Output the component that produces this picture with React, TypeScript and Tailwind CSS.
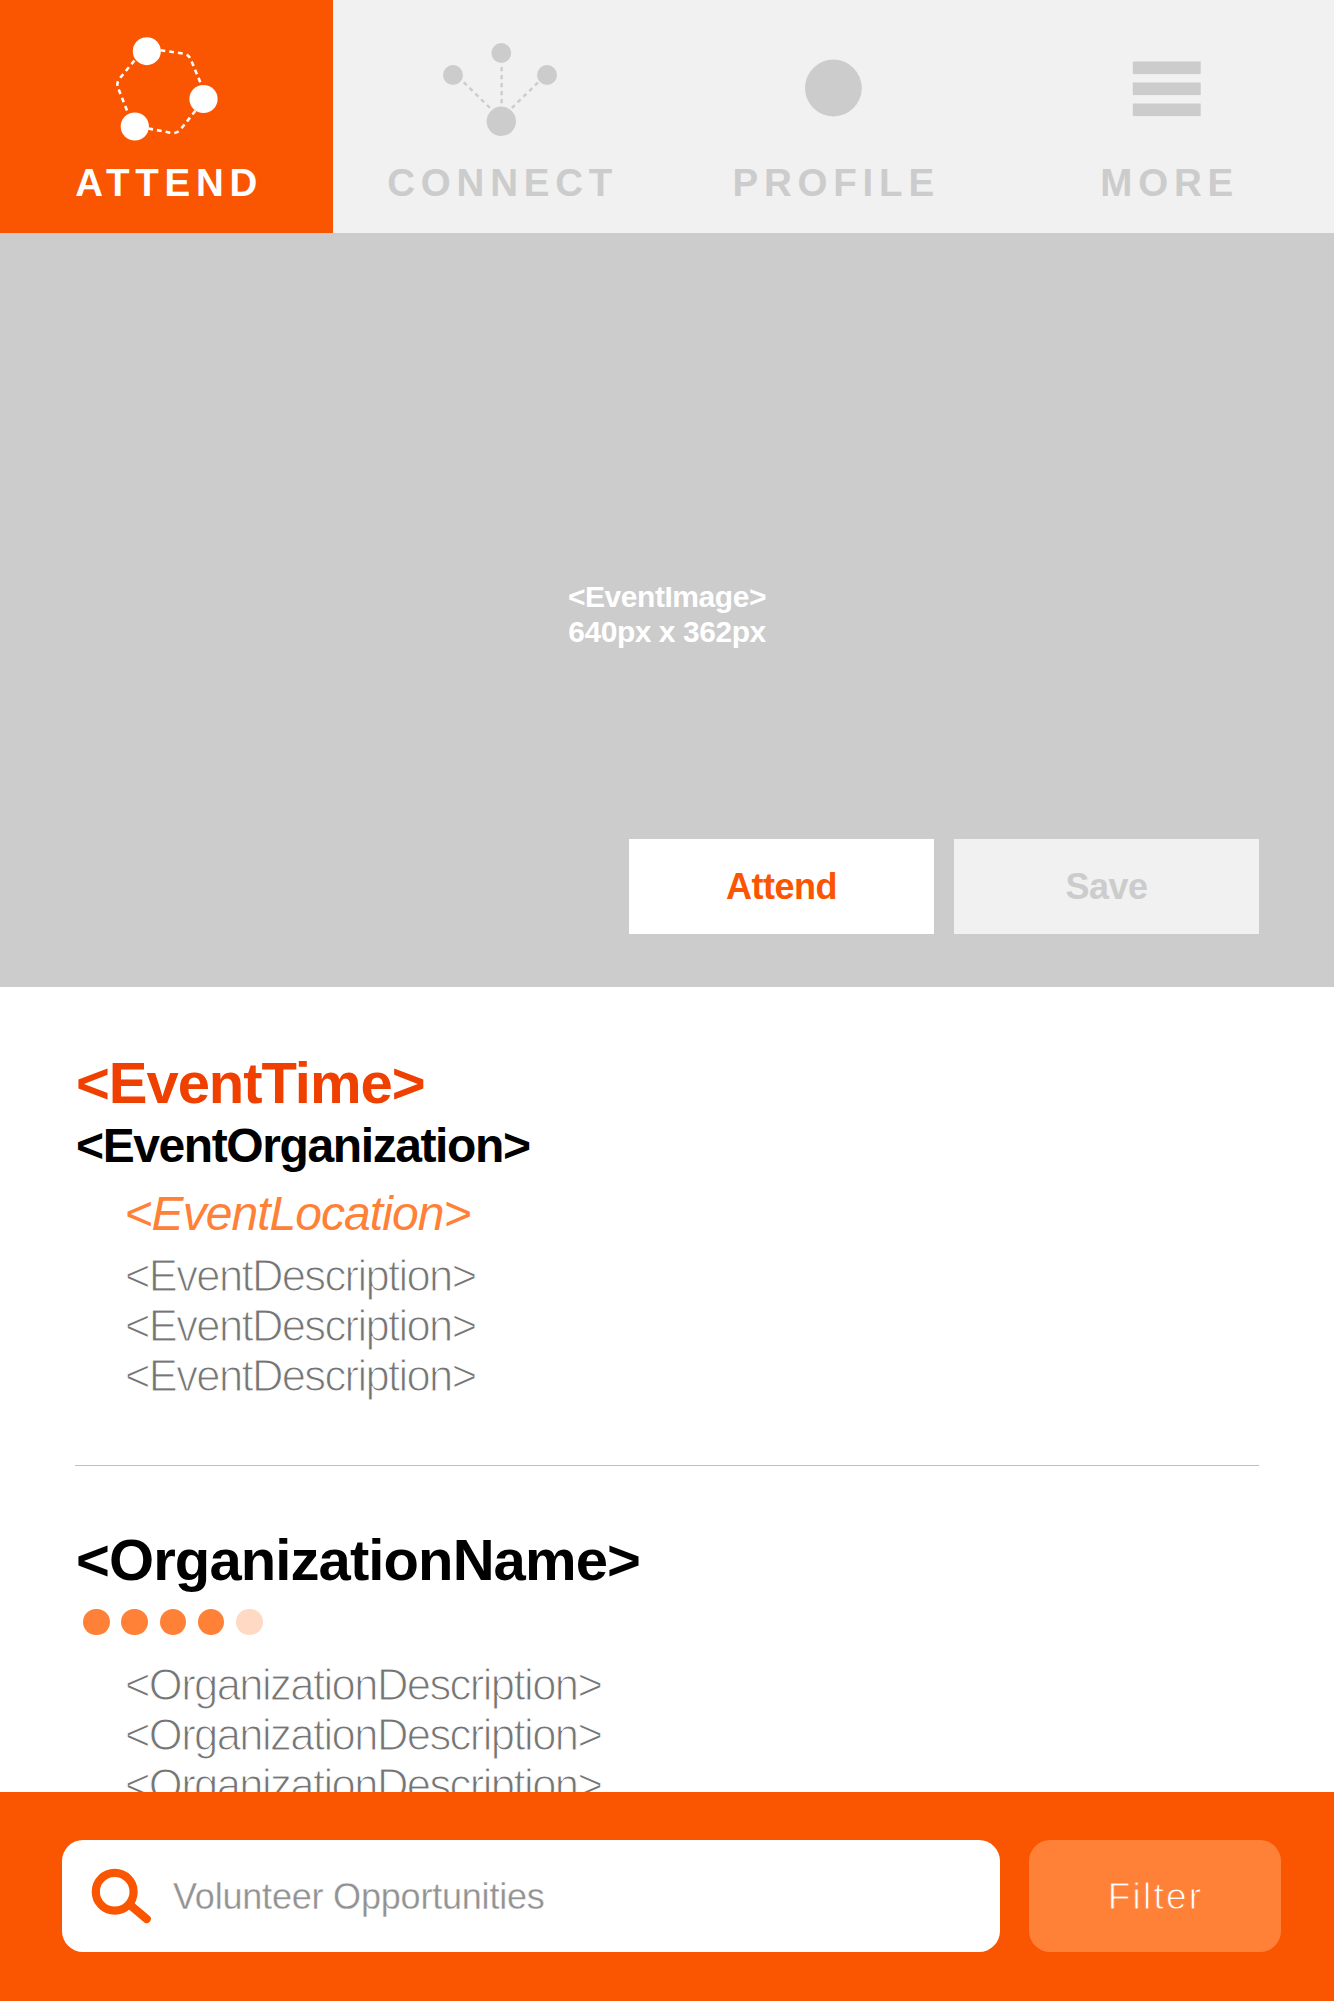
import type { ReactNode } from "react";

type TabProps = {
  label: string;
  className: string;
  viewBox: string;
  children: ReactNode;
};

function Tab({ label, className, viewBox, children }: TabProps) {
  return (
    <button className={`flex h-full flex-col items-center ${className}`}>
      <svg className="h-[162px] w-full shrink-0" viewBox={viewBox} fill="currentColor">
        {children}
      </svg>
      <span className="mt-px pl-[5.4px] text-[38.5px] leading-[40px] font-bold tracking-[5.8px]">{label}</span>
    </button>
  );
}

function TopNav() {
  return (
    <nav className="flex h-[233px] shrink-0 bg-[#f1f1f1] text-[#cccccc]">
      <Tab label="ATTEND" className="w-[333px] bg-[#fa5500] text-white" viewBox="0 0 333 162">
        <g fill="none" stroke="currentColor" strokeWidth="2.6" strokeDasharray="4.8 4">
          <path d="M160.5 50.3 L183 53.5 Q189 54.5 191 60 L201 84" />
          <path d="M134.5 60.5 L120 78 Q116.5 82 117.5 86.5 L128 113" />
          <path d="M148.3 128.5 L172 133 Q177 133.5 180.5 129.5 L196 110" />
        </g>
        <circle cx="146.8" cy="51.2" r="14" />
        <circle cx="203.5" cy="99" r="14.1" />
        <circle cx="134.8" cy="126.5" r="14.1" />
      </Tab>
      <Tab label="CONNECT" className="w-[334px]" viewBox="333 0 334 162">
        <g fill="none" stroke="currentColor" strokeWidth="2.4">
          <path d="M501.7 67 V104" strokeDasharray="4.2 3.8" />
          <path d="M463.8 82.3 L490 108" strokeDasharray="4.2 3.9" />
          <path d="M538 82.5 L511.8 108" strokeDasharray="4.2 3.9" />
        </g>
        <circle cx="501.3" cy="53" r="9.9" />
        <circle cx="453" cy="75" r="10" />
        <circle cx="547" cy="75" r="10" />
        <circle cx="501.3" cy="121.3" r="14.7" />
      </Tab>
      <Tab label="PROFILE" className="w-[333px]" viewBox="667 0 333 162">
        <circle cx="833.4" cy="88" r="28.4" />
      </Tab>
      <Tab label="MORE" className="w-[334px]" viewBox="1000 0 334 162">
        <rect x="1132.8" y="61.5" width="67.9" height="12.6" />
        <rect x="1132.8" y="82.5" width="67.9" height="12.6" />
        <rect x="1132.8" y="103.5" width="67.9" height="12.6" />
      </Tab>
    </nav>
  );
}

function Hero() {
  return (
    <section className="flex h-[754px] shrink-0 flex-col bg-[#cccccc] pt-[346px]">
      <p className="text-center text-[30px] leading-[35px] font-bold tracking-[-0.45px] text-white">
        &lt;EventImage&gt;
        <br />
        640px x 362px
      </p>
      <div className="mt-[190px] flex justify-end gap-5 pr-[75px] text-[36px] leading-[40px] font-bold tracking-[-0.5px]">
        <button className="h-[95px] w-[305px] bg-white pt-px text-[#fa5500]">Attend</button>
        <button className="h-[95px] w-[305px] bg-[#f1f1f1] pt-px text-[#cccccc]">Save</button>
      </div>
    </section>
  );
}

const lightText =
  "pl-[50px] text-[43.5px] leading-[50px] text-[#757575] [-webkit-text-stroke:1.1px_#ffffff]";

function Details() {
  return (
    <main className="flex min-h-0 flex-1 flex-col overflow-hidden px-[75px] pt-[67px]">
      <h1 className="pl-px text-[58px] leading-[58px] font-bold tracking-[-1.05px] text-[#f04000]">
        &lt;EventTime&gt;
      </h1>
      <h2 className="mt-[10px] pl-px text-[48px] leading-[48px] font-bold tracking-[-1.4px] text-black">
        &lt;EventOrganization&gt;
      </h2>
      <p className="mt-5 pl-[49.5px] text-[48px] leading-[48px] tracking-[-0.95px] text-[#ff8137] italic">
        &lt;EventLocation&gt;
      </p>
      <div className={`mt-[13px] tracking-[-1.62px] ${lightText}`}>
        <p>&lt;EventDescription&gt;</p>
        <p>&lt;EventDescription&gt;</p>
        <p>&lt;EventDescription&gt;</p>
      </div>
      <hr className="mt-[64px] h-px shrink-0 border-0 bg-[#bfbfbf]" />
      <h2 className="mt-[65px] pl-px text-[58px] leading-[58px] font-bold tracking-[-0.9px] text-black">
        &lt;OrganizationName&gt;
      </h2>
      <div className="mt-[19.5px] flex shrink-0 gap-[11.8px] pl-2">
        <span className="size-[26.5px] rounded-full bg-[#ff8137]" />
        <span className="size-[26.5px] rounded-full bg-[#ff8137]" />
        <span className="size-[26.5px] rounded-full bg-[#ff8137]" />
        <span className="size-[26.5px] rounded-full bg-[#ff8137]" />
        <span className="size-[26.5px] rounded-full bg-[#ffd9c4]" />
      </div>
      <div className={`mt-[25px] tracking-[-1.55px] ${lightText}`}>
        <p>&lt;OrganizationDescription&gt;</p>
        <p>&lt;OrganizationDescription&gt;</p>
        <p>&lt;OrganizationDescription&gt;</p>
      </div>
    </main>
  );
}

function SearchBar() {
  return (
    <footer className="flex h-[209px] shrink-0 gap-[29px] bg-[#fa5500] pt-12 pl-[62px]">
      <div className="flex h-[112px] w-[938px] items-center rounded-[21px] bg-white pl-[28px]">
        <svg
          className="h-[58px] w-[64px] shrink-0"
          viewBox="90 1867 64 58"
          fill="none"
          stroke="#fa5500"
          strokeWidth="8.2"
          strokeLinecap="round"
        >
          <circle cx="114.7" cy="1891.7" r="18.9" />
          <path d="M129.5 1904.5 L146.7 1919" />
        </svg>
        <span className="pt-px pl-[19px] text-[36px] leading-[40px] tracking-[-0.2px] text-[#929292] [-webkit-text-stroke:0.3px_#ffffff]">
          Volunteer Opportunities
        </span>
      </div>
      <button className="h-[112px] w-[252px] rounded-[21px] bg-[#ff8137] pt-[2px] pl-px text-[37px] leading-[40px] tracking-[2.2px] text-white [-webkit-text-stroke:0.9px_#ff8137]">
        Filter
      </button>
    </footer>
  );
}

export default function App() {
  return (
    <div className="flex h-[2001px] w-[1334px] flex-col overflow-hidden bg-white font-['Liberation_Sans',Arial,sans-serif]">
      <TopNav />
      <Hero />
      <Details />
      <SearchBar />
    </div>
  );
}
